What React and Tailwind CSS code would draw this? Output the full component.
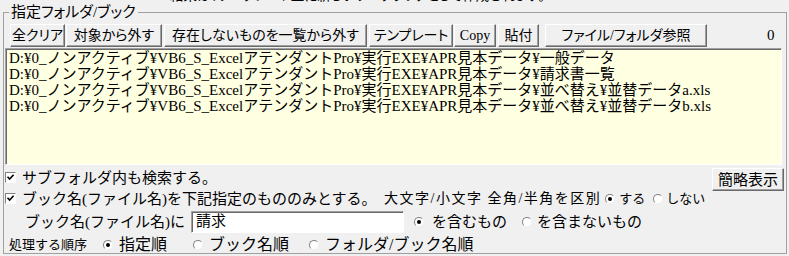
import React from "react";

const FONT = "font-['Liberation_Serif','Noto_Sans_CJK_JP',serif]";

function Btn({ w, children, className = "" }) {
  return (
    <div
      className={`${w} h-[23px] shrink-0 flex items-center justify-center bg-[#f0f0f0] border border-t-white border-l-white border-r-[#696969] border-b-[#696969] shadow-[inset_-1px_-1px_0_#a0a0a0] text-[14px] leading-[16px] [font-feature-settings:'palt'] whitespace-nowrap ${className}`}
    >
      {children}
    </div>
  );
}

function Check() {
  return (
    <span className="relative inline-block w-[11px] h-[11px] shrink-0 bg-white border border-t-[#808080] border-l-[#808080] border-r-white border-b-white">
      <svg viewBox="0 0 9 9" className="absolute left-0 top-0 w-[9px] h-[9px]">
        <path d="M1.5 3.8 L3.6 6 L7.6 1.8" stroke="#000" strokeWidth="1.6" fill="none" />
      </svg>
    </span>
  );
}

function Radio({ checked }) {
  return (
    <span className="relative inline-block w-[10px] h-[10px] shrink-0 rounded-full bg-white border border-t-[#808080] border-l-[#808080] border-r-[#f0f0f0] border-b-[#f0f0f0]">
      {checked && (
        <span className="absolute left-[2px] top-[2px] w-[4px] h-[4px] rounded-full bg-black" />
      )}
    </span>
  );
}

const lines = [
  "D:¥0_ノンアクティブ¥VB6_S_ExcelアテンダントPro¥実行EXE¥APR見本データ¥一般データ",
  "D:¥0_ノンアクティブ¥VB6_S_ExcelアテンダントPro¥実行EXE¥APR見本データ¥請求書一覧",
  "D:¥0_ノンアクティブ¥VB6_S_ExcelアテンダントPro¥実行EXE¥APR見本データ¥並べ替え¥並替データa.xls",
  "D:¥0_ノンアクティブ¥VB6_S_ExcelアテンダントPro¥実行EXE¥APR見本データ¥並べ替え¥並替データb.xls",
];

export default function App() {
  return (
    <div className={`relative w-[789px] h-[256px] overflow-hidden bg-[#f0f0f0] text-black ${FONT}`}>
      <div className="absolute left-[170px] top-[-12px] text-[13.5px] leading-[16px] whitespace-nowrap [font-feature-settings:'palt']">
        結果は、ワークシート上に新しいワークブックとして作成されます。
      </div>
      <fieldset className="ml-[3px] mt-[3px] w-[784px] h-[251px] border border-[#a0a0a0] p-0 m-0">
        <legend className="ml-[5px] px-[2px] text-[15px] leading-[19px] [font-feature-settings:'palt']">
          指定フォルダ/ブック
        </legend>

        <div className="flex items-center mt-[2px] pl-[6px] h-[23px]">
          <Btn w="w-[55px]">全クリア</Btn>
          <Btn w="w-[96px]" className="ml-[1px]">対象から外す</Btn>
          <Btn w="w-[203px]" className="ml-[2px]">存在しないものを一覧から外す</Btn>
          <Btn w="w-[84px]" className="ml-[2px]">テンプレート</Btn>
          <Btn w="w-[42px]" className="ml-[1px]">Copy</Btn>
          <Btn w="w-[41px]" className="ml-[2px]">貼付</Btn>
          <Btn w="w-[162px]" className="ml-[6px]">ファイル/フォルダ参照</Btn>
          <span className="ml-[60px] text-[15px]">0</span>
        </div>

        <div className="ml-[1px] mt-[1px] w-[777px] h-[117px] bg-[#ffffe1] border border-t-[#a0a0a0] border-l-[#a0a0a0] border-r-white border-b-white shadow-[inset_1px_1px_0_#696969] pl-[3px] pt-[1px] text-[15px] leading-[16px] whitespace-nowrap">
          {lines.map((l, i) => (
            <div key={i}>{l}</div>
          ))}
        </div>

        <div className="flex">
          <div className="flex flex-col flex-1">
            <div className="flex items-center h-[21px] pl-[1px] mt-[2px]">
              <Check />
              <span className="ml-[6px] text-[15px] leading-[18px]">サブフォルダ内も検索する。</span>
            </div>
            <div className="flex items-center h-[21px] pl-[1px]">
              <Check />
              <span className="ml-[6px] w-[362px] text-[15px] leading-[18px] whitespace-nowrap">
                ブック名(ファイル名)を下記指定のもののみとする。
              </span>
              <span className="text-[14px] leading-[16px] whitespace-nowrap tracking-[1.5px]">大文字/小文字 全角/半角を区別</span>
              <span className="ml-[4px]"><Radio checked /></span>
              <span className="ml-[4px] text-[13px] leading-[16px]">する</span>
              <span className="ml-[8px]"><Radio /></span>
              <span className="ml-[3px] text-[13px] leading-[16px]">しない</span>
            </div>
          </div>
          <Btn w="w-[72px]" className="mt-[3px] mr-[2px] text-[15px]">簡略表示</Btn>
        </div>

        <div className="flex items-center h-[24px] mt-[1px]">
          <span className="ml-[21px] w-[166px] text-[15px] leading-[18px] whitespace-nowrap">ブック名(ファイル名)に</span>
          <div className="w-[213px] h-[22px] bg-white border border-t-[#a0a0a0] border-l-[#a0a0a0] border-r-white border-b-white shadow-[inset_1px_1px_0_#696969] pl-[4px] text-[15px] leading-[19px]">
            請求
          </div>
          <span className="ml-[10px]"><Radio checked /></span>
          <span className="ml-[8px] text-[15px] leading-[18px]">を含むもの</span>
          <span className="ml-[15px]"><Radio /></span>
          <span className="ml-[5px] text-[15px] leading-[18px]">を含まないもの</span>
        </div>

        <div className="flex items-center h-[22px]">
          <span className="ml-[5px] w-[94px] text-[13px] leading-[16px] whitespace-nowrap">処理する順序</span>
          <Radio checked />
          <span className="ml-[6px] w-[74px] text-[16px] leading-[18px]">指定順</span>
          <Radio />
          <span className="ml-[6px] w-[100px] text-[16px] leading-[18px]">ブック名順</span>
          <Radio />
          <span className="ml-[6px] text-[16px] leading-[18px]">フォルダ/ブック名順</span>
        </div>
      </fieldset>
    </div>
  );
}
